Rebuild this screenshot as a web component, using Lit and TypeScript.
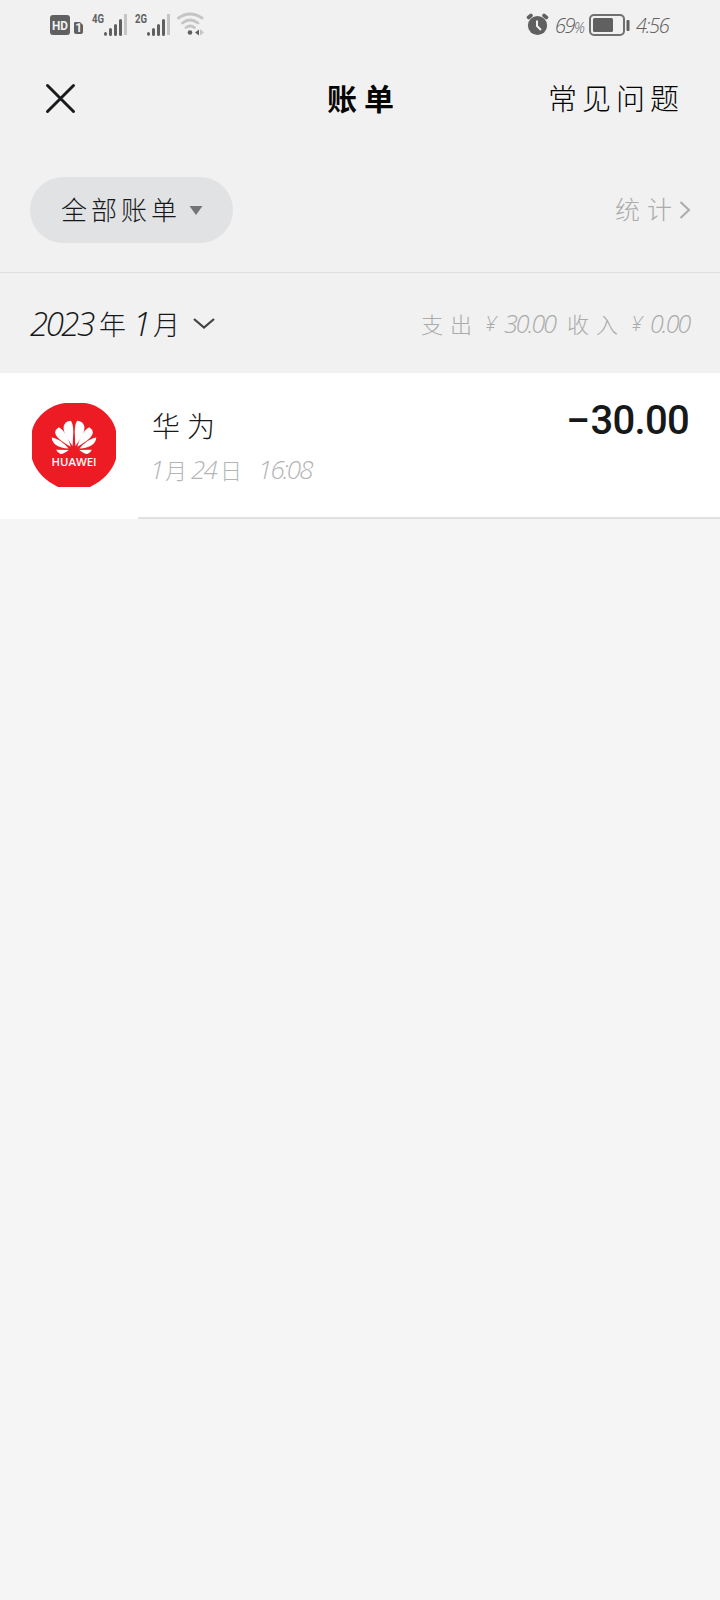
import { LitElement, html, css, svg } from "lit";
import { customElement } from "lit/decorators.js";

const petals = () => svg`
  <path d="M41.600 44C35.500 35.500 32 30 32.700 24.500Q33.700 19.500 39.800 18.800Q42.300 22 42.300 30Z"></path>
  <path d="M39.700 44.800C30 39 24.500 35 24.200 30.500Q24.300 27.500 27.700 25.300C33 28 37 35 39.700 44.800Z"></path>
  <path d="M37.600 46.600C27 46 21.300 42.500 20.700 35.600C27 36.800 33 41 37.600 46.600Z"></path>
  <path d="M37.800 48C34 51.200 31.500 52.200 29.500 52Q26.500 51 25.200 47.700Z"></path>`;

@customElement("app-root")
export class AppRoot extends LitElement {
  static styles = css`
    :host { display: block; height: 1600px; background: #f5f5f5; color: #16181a;
      font-family: "Noto Sans CJK SC", sans-serif; font-weight: 300; overflow: hidden; }
    * { box-sizing: border-box; }
    svg { display: block; flex: none; }
    .row { display: flex; align-items: center; white-space: nowrap; }
    .n { font-family: "Open Sans", sans-serif; font-style: italic; font-weight: 300; flex: none; }
    .top { background: #f1f1f1; }
    .status { height: 50px; padding: 0 49px; justify-content: space-between; color: #606060; }
    .pct { font-size: 20px; width: 33px; margin-left: 5px; letter-spacing: -1.5px; }
    .pct small { font-size: 14px; }
    .bat { margin-left: 1px; }
    .clock { font-size: 20px; width: 35px; margin-left: 6px; letter-spacing: -1.3px; }
    .nav { height: 98px; display: grid; grid-template-columns: 1fr auto 1fr; align-items: center;
      padding: 0 36px 0 44px; color: #050505; line-height: 40px; white-space: nowrap; }
    .nav span { padding-bottom: 4px; }
    .title { font-size: 30px; font-weight: 700; letter-spacing: 7px; }
    .faq { justify-self: end; font-size: 29px; letter-spacing: 5px; }
    .filter { height: 125px; padding: 0 29px 0 30px; justify-content: space-between; border-bottom: 1px solid #dedfe0; }
    .pill { height: 66px; width: 203px; border-radius: 33px; background: #e1e2e4; padding-left: 31px;
      font-size: 26px; letter-spacing: 4px; }
    .pill span, .stat span { padding-bottom: 4px; }
    .pill svg { margin-left: 8px; }
    .stat { color: #aaabab; font-size: 25px; letter-spacing: 7px; }
    .month { height: 100px; padding: 0 30px; justify-content: space-between; font-size: 27px; }
    .month .n { font-size: 33px; letter-spacing: -2.5px; }
    .yr { width: 69px; } .one { width: 20px; margin-left: 7px; }
    .down { margin-left: 13px; }
    .month .sum { color: #aaabab; font-size: 22px; }
    .sum .w { width: 58px; letter-spacing: 7px; }
    .month .sum .n { font-size: 25px; letter-spacing: -1.9px; }
    .month .sum .yen { font-size: 21px; margin-left: 6px; width: 19px; }
    .a1 { width: 63px; } .a2 { width: 40px; }
    .item { height: 146px; background: #fff; display: flex; padding-left: 31px; }
    .logo { margin-top: 29px; }
    .body { flex: 1; margin-left: 21px; border-bottom: 2px solid #e1e1e1; padding: 29px 30px 0 14px;
      display: flex; justify-content: space-between; }
    .name { font-size: 28px; letter-spacing: 7px; line-height: 46px; }
    .date { color: #b4b5b5; font-size: 22px; line-height: 42px; height: 42px; }
    .date .n { font-size: 26px; letter-spacing: -1.9px; }
    .d1 { width: 15px; margin-left: -2px; } .d24 { width: 29px; margin-left: 4px; } .time { margin-left: 16px; }
    .amt { font: 500 40px/46px Roboto, sans-serif; letter-spacing: -.7px; margin: -4px 1px 0 0; display: flex; }
    .minus { transform: scaleX(.9); transform-origin: right; margin-right: 1px; }
    .brand { font: 600 11px "Open Sans", sans-serif; }
    .tiny { font: 700 12px Roboto, sans-serif; }
  `;

  bars(x: number, label: string) {
    return svg`<text class="tiny" x=${x} y="11" textLength="12" lengthAdjust="spacingAndGlyphs">${label}</text>
      <g stroke="#606060" stroke-width="3" stroke-linecap="round">
        <path d="M${x + 13.5} 21.500v.8M${x + 18.5} 17.500v5M${x + 23.5} 13.500v9M${x + 28.5} 8.500v14"></path>
        <path d="M${x + 33.5} 2v21" stroke="#c5c5c5" stroke-linecap="butt"></path></g>`;
  }

  render() {
    return html`
      <div class="top">
        <div class="row status">
          <svg width="160" height="26" viewBox="0 0 160 26" fill="#606060">
            <rect x="1" y="3" width="20" height="20" rx="3"></rect>
            <text x="3" y="17.500" textLength="16" lengthAdjust="spacingAndGlyphs" fill="#f1f1f1" class="tiny">HD</text>
            <path d="M25 11q0-1 1-1h5l3 3v7q0 2-2 2h-5q-2 0-2-2z"></path>
            <text x="26.300" y="20.300" fill="#f1f1f1" class="tiny">1</text>
            ${this.bars(43, "4G")} ${this.bars(86, "2G")}
            <g fill="none" stroke="#c5c5c5" stroke-width="2.8" stroke-linecap="round">
              <path d="M129.500 6Q141-2 153 6M133.500 11Q141 5 149 11M137 15.500Q141 12.500 145.500 15.500"></path></g>
            <circle cx="141" cy="20.500" r="2.3"></circle>
            <path d="M146 20.500l4-3v6z"></path><path fill="#c5c5c5" d="M151 17l4 3.500-4 3z"></path>
          </svg>
          <div class="row">
            <svg width="24" height="24" viewBox="0 0 24 24"><circle cx="11.500" cy="12.500" r="9.600" fill="#606060"></circle>
              <path d="M2.500 4.500l2.500-2M20.500 4.500l-2.500-2" stroke="#606060" stroke-width="3.600" stroke-linecap="round"></path>
              <path d="M11 7.500v5.500l4 4" fill="none" stroke="#f1f1f1" stroke-width="2"></path></svg>
            <span class="n pct">69<small>%</small></span>
            <svg class="bat" width="41" height="22" viewBox="0 0 41 22"><rect x="1" y="1" width="34" height="20" rx="4" fill="none" stroke="#707070" stroke-width="2"></rect>
              <rect x="4" y="4" width="20" height="14" rx="1.500" fill="#606060"></rect><rect x="37.500" y="6" width="3" height="11" rx="1" fill="#606060"></rect></svg>
            <span class="n clock">4:56</span>
          </div>
        </div>
        <div class="nav">
          <svg width="34" height="34" viewBox="0 0 34 34"><path d="M3.500 3.500l26 26M29.500 3.500l-26 26" stroke="#191b1d" stroke-width="3" stroke-linecap="round"></path></svg>
          <span class="title">账单</span><span class="faq">常见问题</span>
        </div>
        <div class="row filter">
          <div class="row pill"><span>全部账单</span><svg width="14" height="9" viewBox="0 0 14 9"><path d="M.5 0h13L7 9z" fill="#737476"></path></svg></div>
          <div class="row stat"><span>统计</span><svg width="12" height="20" viewBox="0 0 12 20"><path d="M1.500 2l8.500 8-8.500 8" fill="none" stroke="#aaabab" stroke-width="2"></path></svg></div>
        </div>
        <div class="row month">
          <div class="row"><span class="n yr">2023</span>年<span class="n one">1</span>月
            <svg class="down" width="22" height="13" viewBox="0 0 22 13"><path d="M1 2l10 8.500L21 2" fill="none" stroke="#414244" stroke-width="2.200"></path></svg></div>
          <div class="row sum"><span class="w">支出</span><span class="n yen">¥</span><span class="n a1">30.00</span><span class="w">收入</span><span class="n yen">¥</span><span class="n a2">0.00</span></div>
        </div>
      </div>
      <div class="item">
        <svg class="logo" width="86" height="86" viewBox="0 0 86 86">
          <path d="M34 1H54C70 3 83 17 85 29V57C81 70 71 79 59 85H27C15 79 5 70 1 57V29C3 17 17 3 34 1Z" fill="#ed1c24"></path>
          <g fill="#fff">
            ${petals()}
            <g transform="translate(86 0) scale(-1 1)">${petals()}</g>
            <text class="brand" x="20.500" y="63.800" textLength="45" lengthAdjust="spacingAndGlyphs">HUAWEI</text>
          </g>
        </svg>
        <div class="body">
          <div><div class="name">华为</div>
            <div class="row date"><span class="n d1">1</span>月<span class="n d24">24</span>日<span class="n time">16:08</span></div></div>
          <div class="amt"><span class="minus">–</span>30.00</div>
        </div>
      </div>`;
  }
}
